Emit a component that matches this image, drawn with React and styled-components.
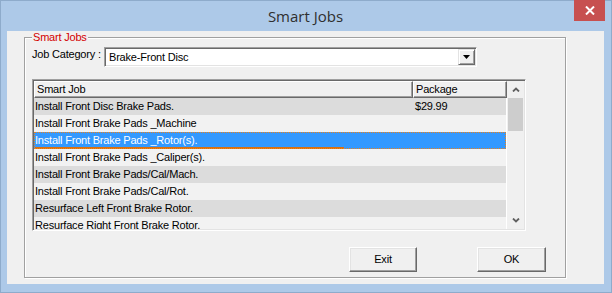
import React from 'react';
import styled, { createGlobalStyle } from 'styled-components';

const Global = createGlobalStyle`
  html, body { margin: 0; padding: 0; background: #fff; }
  #root { width: 612px; height: 293px; }
  * { box-sizing: border-box; }
`;

const Window = styled.div`
  width: 612px;
  height: 293px;
  background: #adc9e8;
  box-shadow: inset 0 0 0 1px #8eabcb;
  display: flex;
  flex-direction: column;
  padding: 0 8px 9px 7px;
  font-family: "Liberation Sans", Arial, sans-serif;
  font-size: 11px;
  letter-spacing: -0.2px;
  color: #000;
`;

const TitleBar = styled.div`
  position: relative;
  height: 31px;
  flex: none;
  display: flex;
  align-items: center;
  justify-content: center;
`;

const Title = styled.div`
  font-family: "Open Sans", "Noto Sans", sans-serif;
  font-size: 15px;
  letter-spacing: 0;
  color: #2f2f2f;
  margin-top: 1px;
`;

const CloseButton = styled.div`
  position: absolute;
  top: 0;
  right: -1px;
  width: 31px;
  height: 21px;
  background: #c75050;
  display: flex;
  align-items: center;
  justify-content: center;
`;

const Client = styled.div`
  flex: 1;
  background: #f0f0f0;
  padding: 6px 0 0 17px;
`;

const GroupBox = styled.div`
  position: relative;
  width: 542px;
  height: 241px;
  border: 1px solid #a0a0a0;
  box-shadow: 1px 1px 0 #fff, inset 1px 1px 0 #fff;
  padding: 9px 19px 5px 7px;
  display: flex;
  flex-direction: column;
`;

const Legend = styled.div`
  position: absolute;
  top: -7px;
  left: 7px;
  padding: 0 1px;
  line-height: 13px;
  background: #f0f0f0;
  color: #d40000;
`;

const CategoryRow = styled.div`
  display: flex;
  align-items: flex-start;
  height: 20px;
`;

const Label = styled.div`
  width: 72px;
  line-height: 13px;
  padding-top: 1px;
`;

const Combo = styled.div`
  width: 373px;
  height: 20px;
  background: #fff;
  border: 1px solid;
  border-color: #a0a0a0 #fff #fff #a0a0a0;
  box-shadow: inset 1px 1px 0 #696969, inset -1px -1px 0 #e3e3e3;
  padding: 1px 1px 1px 1px;
  display: flex;
`;

const ComboText = styled.div`
  flex: 1;
  line-height: 16px;
  padding-left: 3px;
`;

const DropButton = styled.div`
  width: 17px;
  background: #f0f0f0;
  border: 1px solid;
  border-color: #e3e3e3 #696969 #696969 #e3e3e3;
  box-shadow: inset 1px 1px 0 #fff, inset -1px -1px 0 #a0a0a0;
  display: flex;
  align-items: center;
  justify-content: center;
`;

const ListView = styled.div`
  margin-top: 12px;
  width: 494px;
  height: 152px;
  border: 1px solid;
  border-color: #a0a0a0 #fff #fff #a0a0a0;
  box-shadow: inset 1px 1px 0 #696969, inset -1px -1px 0 #e3e3e3;
  padding: 1px;
  display: flex;
  background: #f0f0f0;
`;

const Table = styled.div`
  flex: 1;
  min-width: 0;
  display: flex;
  flex-direction: column;
`;

const HeaderRow = styled.div`
  display: flex;
  height: 17px;
  flex: none;
`;

const HeaderCell = styled.div`
  width: ${p => (p.$w ? `${p.$w}px` : 'auto')};
  flex: ${p => (p.$w ? 'none' : '1')};
  background: #f0f0f0;
  border: 1px solid;
  border-color: #fff #696969 #696969 #fff;
  box-shadow: inset -1px -1px 0 #a0a0a0;
  padding-left: 2px;
  line-height: 15px;
  white-space: nowrap;
  overflow: hidden;
`;

const Rows = styled.div`
  flex: 1;
  overflow: hidden;
  border-right: 1px solid #fff;
`;

const rowBg = { gray: '#dcdcdc', light: '#f2f2f2', selected: '#3399ff' };

const Row = styled.div`
  position: relative;
  display: flex;
  height: 17px;
  line-height: 17px;
  background: ${p => rowBg[p.$kind]};
  color: ${p => (p.$kind === 'selected' ? '#fff' : '#000')};
  white-space: nowrap;
  ${p =>
    p.$kind === 'selected' &&
    `&::after {
      content: '';
      position: absolute;
      inset: 0;
      border: 1px dotted #e8821e;
    }`}
`;

const FocusLine = styled.div`
  position: absolute;
  left: 1px;
  bottom: 0;
  width: 309px;
  height: 2px;
  background: #d9700f;
`;

const Cell = styled.div`
  width: ${p => (p.$w ? `${p.$w}px` : 'auto')};
  flex: ${p => (p.$w ? 'none' : '1')};
  padding-left: ${p => p.$pad}px;
  overflow: hidden;
`;

const ScrollBar = styled.div`
  width: 17px;
  flex: none;
  display: flex;
  flex-direction: column;
  background: #f0f0f0;
`;

const ScrollArrow = styled.div`
  height: 17px;
  flex: none;
  display: flex;
  align-items: center;
  justify-content: center;
`;

const Thumb = styled.div`
  height: 33px;
  margin: 0 1px;
  background: #cdcdcd;
  flex: none;
`;

const Track = styled.div`
  flex: 1;
`;

const ButtonRow = styled.div`
  margin-top: 16px;
  height: 25px;
  display: flex;
  justify-content: flex-end;
  gap: 60px;
`;

const Button = styled.button`
  width: ${p => p.$w}px;
  height: 25px;
  padding: 0;
  margin: 0;
  background: #f0f0f0;
  border: 1px solid;
  border-color: #fff #696969 #696969 #fff;
  box-shadow: inset -1px -1px 0 #a0a0a0, inset 1px 1px 0 #e3e3e3;
  font-family: inherit;
  font-size: 11px;
  letter-spacing: -0.2px;
  line-height: 23px;
  color: #000;
`;

const jobs = [
  { name: 'Install Front Disc Brake Pads.', pkg: '$29.99', kind: 'gray' },
  { name: 'Install Front Brake Pads _Machine', pkg: '', kind: 'light' },
  { name: 'Install Front Brake Pads _Rotor(s).', pkg: '', kind: 'selected' },
  { name: 'Install Front Brake Pads _Caliper(s).', pkg: '', kind: 'light' },
  { name: 'Install Front Brake Pads/Cal/Mach.', pkg: '', kind: 'gray' },
  { name: 'Install Front Brake Pads/Cal/Rot.', pkg: '', kind: 'light' },
  { name: 'Resurface Left Front Brake Rotor.', pkg: '', kind: 'gray' },
  { name: 'Resurface Right Front Brake Rotor.', pkg: '', kind: 'light' },
];

export default function App() {
  return (
    <>
      <Global />
      <Window>
        <TitleBar>
          <Title>Smart Jobs</Title>
          <CloseButton>
            <svg width="10" height="9" viewBox="0 0 10 9">
              <path d="M1 0.5 L9 8.5 M9 0.5 L1 8.5" stroke="#fff" strokeWidth="2" fill="none" />
            </svg>
          </CloseButton>
        </TitleBar>
        <Client>
          <GroupBox>
            <Legend>Smart Jobs</Legend>
            <CategoryRow>
              <Label>Job Category :</Label>
              <Combo>
                <ComboText>Brake-Front Disc</ComboText>
                <DropButton>
                  <svg width="7" height="4" viewBox="0 0 7 4">
                    <path d="M0 0 H7 L3.5 4 Z" fill="#000" />
                  </svg>
                </DropButton>
              </Combo>
            </CategoryRow>
            <ListView>
              <Table>
                <HeaderRow>
                  <HeaderCell $w={379}>Smart Job</HeaderCell>
                  <HeaderCell>Package</HeaderCell>
                </HeaderRow>
                <Rows>
                  {jobs.map(j => (
                    <Row key={j.name} $kind={j.kind}>
                      <Cell $w={379} $pad={1}>{j.name}</Cell>
                      <Cell $pad={2}>{j.pkg}</Cell>
                      {j.kind === 'selected' && <FocusLine />}
                    </Row>
                  ))}
                </Rows>
              </Table>
              <ScrollBar>
                <ScrollArrow>
                  <svg width="8" height="5" viewBox="0 0 8 5">
                    <path d="M1 4.5 L4 1.5 L7 4.5" stroke="#606060" strokeWidth="1.8" fill="none" />
                  </svg>
                </ScrollArrow>
                <Thumb />
                <Track />
                <ScrollArrow>
                  <svg width="8" height="5" viewBox="0 0 8 5">
                    <path d="M1 0.5 L4 3.5 L7 0.5" stroke="#606060" strokeWidth="1.8" fill="none" />
                  </svg>
                </ScrollArrow>
              </ScrollBar>
            </ListView>
            <ButtonRow>
              <Button $w={68}>Exit</Button>
              <Button $w={69}>OK</Button>
            </ButtonRow>
          </GroupBox>
        </Client>
      </Window>
    </>
  );
}
